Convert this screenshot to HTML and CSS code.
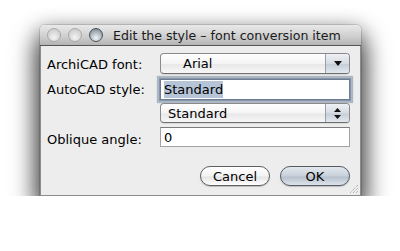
FILE: index.html
```html
<!DOCTYPE html>
<html>
<head>
<meta charset="utf-8">
<link rel="stylesheet" href="styles.css">
</head>
<body>
<div class="window">
  <div class="titlebar">
    <div class="lights">
      <span class="light"></span>
      <span class="light"></span>
      <span class="light graphite"></span>
    </div>
    <div class="title">Edit the style – font conversion item</div>
  </div>
  <div class="content">
    <div class="form">
      <div class="lbl">ArchiCAD font:</div>
      <div class="popup tall">
        <span class="ptext indent">Arial</span>
        <span class="arrow"><svg width="8" height="5" viewBox="0 0 8 5"><path d="M0 0H8L4 5Z" fill="#111"/></svg></span>
      </div>
      <div class="lbl">AutoCAD style:</div>
      <div class="field tall focus"><span class="sel">Standard</span></div>
      <div></div>
      <div class="popup">
        <span class="ptext">Standard</span>
        <span class="arrow"><svg width="7" height="11" viewBox="0 0 7 11"><path d="M0 4H7L3.5 0Z M0 7H7L3.5 11Z" fill="#111"/></svg></span>
      </div>
      <div class="lbl low">Oblique angle:</div>
      <div class="field">0</div>
    </div>
    <div class="buttons">
      <button class="btn">Cancel</button>
      <button class="btn default">OK</button>
    </div>
    <svg class="grip" width="10" height="10" viewBox="0 0 10 10">
      <path d="M9 1L1 9 M9 4L4 9 M9 7L7 9" stroke="#9a9a9a" stroke-width="1" stroke-dasharray="1 1" fill="none"/>
    </svg>
  </div>
</div>
</body>
</html>
```
FILE: styles.css
```css
html, body {
  margin: 0;
  padding: 0;
  background: #ffffff;
}
body {
  padding: 25px 0 0 40px;
  font-family: "DejaVu Sans", "Liberation Sans", sans-serif;
  font-size: 13px;
  color: #000;
}
.window {
  width: 321px;
  box-sizing: border-box;
  border-radius: 5px 5px 0 0;
  box-shadow: 0 16px 26px 3px rgba(0, 0, 0, 0.7), 0 5px 20px 2px rgba(0, 0, 0, 0.3), 0 0 0 1px rgba(0,0,0,0.12);
}
.titlebar {
  height: 20px;
  display: flex;
  align-items: center;
  border-radius: 5px 5px 0 0;
  background: linear-gradient(#e9e9e9, #cdcdcd 60%, #b4b4b4);
  border-bottom: 1px solid #555;
  padding-left: 7px;
}
.lights {
  display: flex;
  gap: 7px;
}
.light {
  width: 14px;
  height: 14px;
  box-sizing: border-box;
  border-radius: 50%;
  border: 1px solid #a9a9a9;
  background: radial-gradient(circle at 50% 70%, #f4f4f4 0%, #dcdcdc 45%, #c6c6c6 100%);
}
.light.graphite {
  border-color: #4b525c;
  background: radial-gradient(circle at 50% 75%, #f2f5f8 0%, #b9c0c9 45%, #6e7783 100%);
}
.title {
  margin-left: 10px;
  color: #1a1a1a;
  white-space: nowrap;
  font-size: 12.6px;
}
.content {
  position: relative;
  background: #ededed;
  border: 1px solid #8c8c8c;
  border-top: none;
  padding: 7px 10px 8px 6px;
  box-sizing: border-box;
  height: 150px;
}
.form {
  display: grid;
  grid-template-columns: 113px 190px;
  grid-template-rows: 21px 21px 20px 20px;
  row-gap: 4px;
  align-items: center;
}
.form > :nth-child(3), .form > :nth-child(4) { margin-top: 1px; }
.lbl {
  white-space: nowrap;
  padding-top: 1px;
}
.lbl.low { padding-top: 4px; }
.popup {
  box-sizing: border-box;
  height: 20px;
  display: flex;
  align-items: center;
  border: 1px solid #8a8a8a;
  border-bottom-color: #6f6f6f;
  border-radius: 4px;
  background: linear-gradient(#ffffff, #f4f4f4 50%, #e8e8e8 55%, #f7f7f7);
  box-shadow: 0 1px 0 rgba(0,0,0,0.08);
  overflow: hidden;
}
.popup.tall { height: 21px; }
.ptext {
  flex: 1;
  padding-left: 7px;
  white-space: nowrap;
}
.ptext.indent { padding-left: 22px; }
.arrow {
  width: 23px;
  align-self: stretch;
  display: flex;
  align-items: center;
  justify-content: center;
  border-left: 1px solid #9a9ea5;
  background: linear-gradient(#eef1f5, #d6dce4 50%, #c6ced8 55%, #e3e8ee);
}
.field {
  box-sizing: border-box;
  height: 20px;
  display: flex;
  align-items: center;
  padding-left: 3px;
  background: #fff;
  border: 1px solid #a3a3a3;
  border-top-color: #7b7b7b;
}
.field.tall { height: 21px; }
.field.focus {
  border-color: #6f7d90;
  box-shadow: 0 0 0 1px #8796aa, 0 0 1px 3px rgba(120, 138, 162, 0.55);
}
.sel {
  background: #b6c4d7;
  padding: 1px 0;
}
.buttons {
  display: flex;
  justify-content: flex-end;
  gap: 10px;
  margin-top: 19px;
}
.btn {
  width: 70px;
  height: 20px;
  padding: 0;
  font: inherit;
  color: #000;
  border: 1px solid #5e5e5e;
  border-radius: 10px;
  background: linear-gradient(#ffffff, #f3f3f3 50%, #e4e4e4 55%, #ffffff);
  box-shadow: 0 1px 1px rgba(0,0,0,0.2);
}
.btn.default {
  border-color: #555b63;
  background: linear-gradient(#e3e8ee, #c8d0da 50%, #b6c0cc 55%, #dce3ea);
}
.grip {
  position: absolute;
  right: 1px;
  bottom: 1px;
}
```
